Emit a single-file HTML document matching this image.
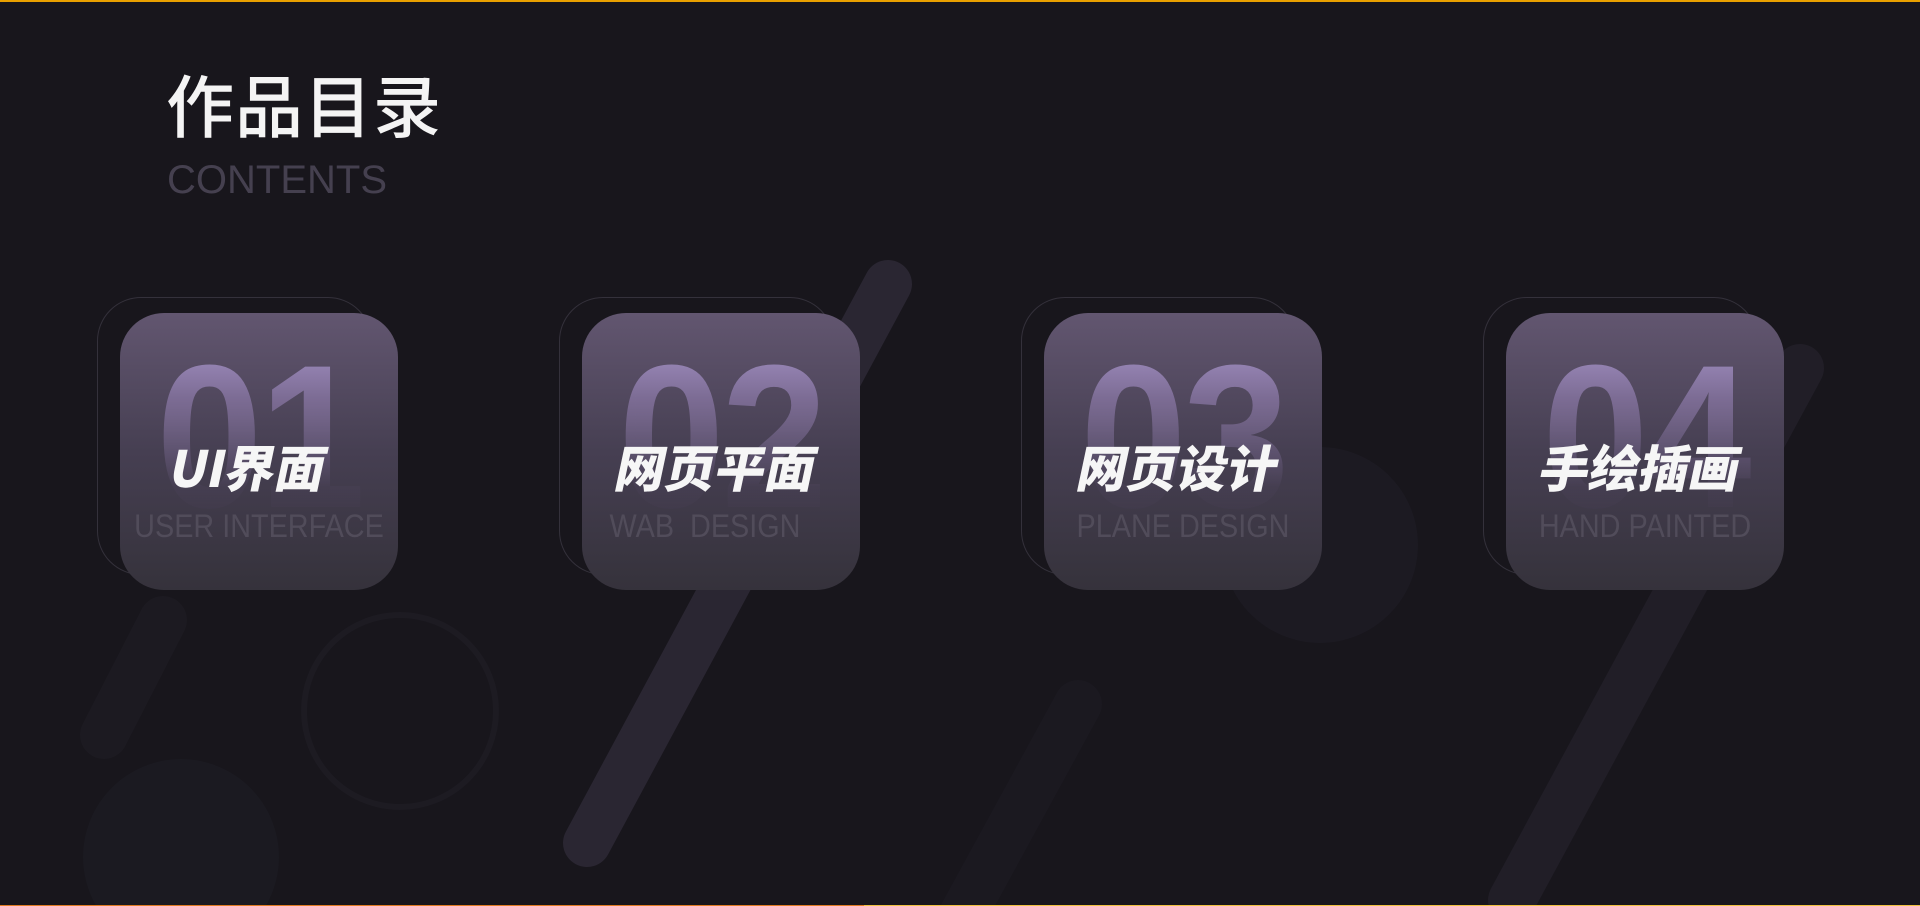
<!DOCTYPE html>
<html style="overflow:hidden"><head><meta charset="utf-8"><style>
*{margin:0;padding:0}
html,body{width:1920px;height:906px;overflow:hidden}
body{background:#18161c;position:relative;font-family:"Liberation Sans","Noto Sans CJK SC",sans-serif}
.topline{position:absolute;left:0;top:0;width:1920px;height:2px;background:#e8a000}
.botline{position:absolute;left:0;bottom:0;width:1920px;height:1px;background:linear-gradient(90deg,#e07a20 0,#e07a20 45%,#f0c040 45%)}
h1{position:absolute;left:166px;top:58px;font-size:68px;font-weight:500;color:#f4f4f4;font-family:"Noto Sans CJK SC",sans-serif;line-height:90px;letter-spacing:1px}
.en{position:absolute;left:167px;top:160px;font-size:40px;color:#45404f;line-height:40px}
.back{position:absolute;width:273px;height:276px;border:1px solid #34313b;border-radius:44px;top:297px}
.card{position:absolute;width:278px;height:277px;top:313px;border-radius:44px;background:linear-gradient(180deg,#625670 0%,#463f52 50%,#35323b 100%);overflow:hidden}
.num{position:absolute;left:0;width:100%;top:24px;text-align:center;font-family:"Liberation Sans",sans-serif;font-weight:bold;font-size:204px;line-height:200px;letter-spacing:-4px;transform:scaleX(0.94);background:linear-gradient(180deg,#a693c8 0%,#7d6d95 30%,rgba(80,70,95,0.25) 75%,rgba(60,55,70,0) 100%);-webkit-background-clip:text;background-clip:text;color:transparent}
.zh{position:absolute;left:-10px;width:100%;top:118px;text-align:center;font-family:"Noto Sans CJK SC",sans-serif;font-weight:900;font-size:50px;line-height:70px;color:#f6f6f6;transform:skewX(-12deg)}
.sub{position:absolute;left:-20px;width:318px;top:196px;text-align:center;font-family:"Liberation Sans",sans-serif;font-size:32px;line-height:34px;color:#514c5a;transform:scaleX(0.9)}
</style></head><body>
<svg width="1920" height="906" style="position:absolute;left:0;top:0">
<g stroke-linecap="round" fill="none">
<line x1="888" y1="284" x2="587" y2="843" stroke="#2a2632" stroke-width="48"/>
<line x1="1800" y1="368" x2="1512" y2="900" stroke="#211e27" stroke-width="48"/>
<line x1="1078" y1="704" x2="960" y2="920" stroke="#1b1920" stroke-width="48"/>
<line x1="163" y1="620" x2="104" y2="735" stroke="#1c1a21" stroke-width="48"/>
</g>
<circle cx="400" cy="711" r="96" fill="none" stroke="#1d1b22" stroke-width="6"/>
<circle cx="181" cy="857" r="98" fill="#1b1a21"/>
<circle cx="1320" cy="545" r="98" fill="#1c1a22"/>
</svg>
<div class="topline"></div>
<div class="botline"></div>
<h1>作品目录</h1>
<div class="en">CONTENTS</div>

<div class="back" style="left:97px"></div>
<div class="card" style="left:120px"><div class="num">01</div><div class="zh">UI界面</div><div class="sub">USER INTERFACE</div></div>

<div class="back" style="left:559px"></div>
<div class="card" style="left:582px"><div class="num">02</div><div class="zh" style="left:-4px">网页平面</div><div class="sub" style="left:-36px">WAB&nbsp; DESIGN</div></div>

<div class="back" style="left:1021px"></div>
<div class="card" style="left:1044px"><div class="num">03</div><div class="zh" style="left:-4px">网页设计</div><div class="sub">PLANE DESIGN</div></div>

<div class="back" style="left:1483px"></div>
<div class="card" style="left:1506px"><div class="num">04</div><div class="zh" style="left:-4px">手绘插画</div><div class="sub">HAND PAINTED</div></div>
</body></html>
